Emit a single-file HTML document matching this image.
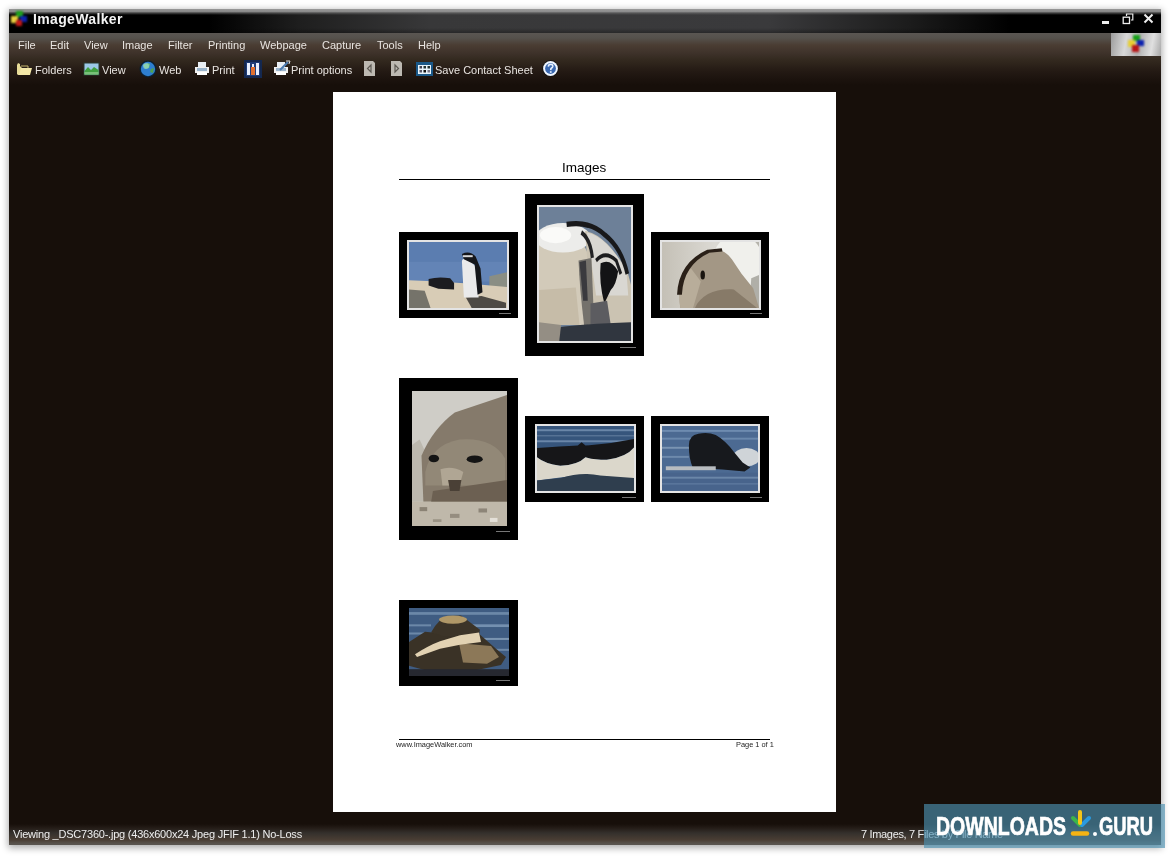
<!DOCTYPE html>
<html><head><meta charset="utf-8">
<style>
*{margin:0;padding:0;box-sizing:border-box}
html,body{width:1175px;height:859px;overflow:hidden;background:#fff;font-family:"Liberation Sans",sans-serif;-webkit-font-smoothing:antialiased}
#win,#page,#wm{will-change:transform}
.abs{position:absolute}
#win{position:absolute;left:9px;top:9px;width:1152px;height:836px;background:#170f0a;box-shadow:0 2px 7px 1px rgba(0,0,0,.33)}
#title{position:absolute;left:0;top:0;width:1152px;height:24px;
 background:linear-gradient(90deg,#000 0,#000 200px,#1e1e1e 290px,#383839 420px,#3a3a3c 760px,#1c1c1c 900px,#000 1000px,#000 100%)}
#title:before{content:"";position:absolute;left:0;top:0;right:0;height:6px;background:linear-gradient(rgba(160,160,160,.95) 0,rgba(150,150,150,.9) 2.5px,rgba(110,110,110,.6) 4px,rgba(0,0,0,0) 6px)}
#title:after{content:"";position:absolute;left:0;bottom:0;right:0;height:5px;background:linear-gradient(rgba(0,0,0,0),rgba(0,0,0,.3))}
#ttxt{position:absolute;left:24px;top:2px;font:bold 14px "Liberation Sans",sans-serif;letter-spacing:.35px;color:#f4f4f4;line-height:16px}
#bars{position:absolute;left:0;top:24px;width:1152px;height:60px;background:linear-gradient(#5a5652 0,#55514c 5px,#4a3d33 12px,#3e322a 20px,#33291f 27px,#241a14 38px,#1c130e 46px,#170f0a 52px)}
.menu{position:absolute;top:5px;font-size:11px;color:#e8e4e0;line-height:14px}
.tb{position:absolute;top:30px;font-size:11px;color:#e8e4e0;line-height:14px}
#status{position:absolute;left:0;top:806px;width:1152px;height:30px;background:linear-gradient(#170f0a 0,#170f0a 9px,#241c17 13px,#34302c 18px,#4a3e34 25px,#56504a 28px,#5a5550 30px)}
#stxt{position:absolute;left:4px;top:12px;font-size:11px;letter-spacing:-.22px;color:#eee;line-height:14px;white-space:nowrap}
#stxt2{position:absolute;left:852px;top:12px;font-size:11px;letter-spacing:-.33px;color:#eee;line-height:14px;white-space:nowrap}
#page{position:absolute;left:333px;top:92px;width:503px;height:720px;background:#fff}
.frame{position:absolute;background:#000}
.ph{position:absolute;border:2px solid #e4e4e4;overflow:hidden}
.pic{display:block}
#wm{position:absolute;left:924px;top:804px;width:241px;height:44px;background:rgba(75,144,177,.65)}
</style></head><body>
<div id="win">
 <div id="title">
  <div id="ttxt">ImageWalker</div>
  <svg class="abs" style="left:0;top:0;filter:blur(.9px)" width="22" height="22" viewBox="0 0 22 22">
   <defs><filter id="bl"><feGaussianBlur stdDeviation=".6"/></filter></defs>
   <g filter="url(#bl)">
   <rect x="7" y="2" width="7" height="6" fill="#1aa01a"/>
   <rect x="11" y="7" width="7" height="6" fill="#1020b0"/>
   <rect x="2" y="7" width="7" height="7" fill="#e8d040"/>
   <rect x="7" y="11" width="6" height="6" fill="#c01818"/>
   </g>
  </svg>
  <div class="abs" style="left:1093px;top:12px;width:7px;height:3px;background:#eee"></div>
  <svg class="abs" style="left:1113px;top:4px" width="12" height="12" viewBox="0 0 12 12">
   <path d="M4.5,3 L4.5,1 L10.8,1 L10.8,7 L9,7" fill="none" stroke="#eee" stroke-width="1.2"/>
   <rect x="1.2" y="4.2" width="6.3" height="6.3" fill="none" stroke="#eee" stroke-width="1.3"/>
  </svg>
  <svg class="abs" style="left:1134px;top:4px" width="11" height="11" viewBox="0 0 11 11">
   <path d="M1.5,1.5 L9.5,9.5 M9.5,1.5 L1.5,9.5" stroke="#eee" stroke-width="2"/>
  </svg>
 </div>
 <div id="bars">
  <div class="abs" style="left:1102px;top:0;width:50px;height:23px;background:linear-gradient(100deg,#9c9c9c 0,#d8d8d8 30%,#b0b0b0 55%,#e0e0e0 80%,#a8a8a8 100%)">
   <svg class="abs" style="left:14px;top:1px;filter:blur(.9px)" width="22" height="22" viewBox="0 0 22 22">
    <g filter="url(#bl)">
    <rect x="8" y="1" width="7" height="6" fill="#18a018"/>
    <rect x="12" y="6" width="7" height="6" fill="#1020b0"/>
    <rect x="3" y="6" width="7" height="7" fill="#e8d030"/>
    <rect x="7" y="11" width="7" height="7" fill="#b81818"/>
    </g>
   </svg>
  </div>
  <svg class="abs" style="left:7px;top:29px" width="17" height="15" viewBox="0 0 17 15">
   <path d="M1,3 L1,12 L2,13 L13,13 L15,6 L6,6 L4,4 L4,2 L2,1Z" fill="#e8dc98"/>
   <path d="M3,13 L5,6 L16,6 L14,13Z" fill="#f4e8a8"/>
   <path d="M5,4 L12,4 L12,6" stroke="#c8b870" fill="none"/>
  </svg>
  <svg class="abs" style="left:74px;top:29px" width="17" height="14" viewBox="0 0 17 14">
   <rect x=".5" y=".5" width="16" height="13" fill="#2a3a30" />
   <rect x="1.5" y="1.5" width="14" height="11" fill="#9cc8e8"/>
   <path d="M1.5,9 L5,5 L8,8 L11,5 L15.5,8 L15.5,12.5 L1.5,12.5Z" fill="#40a040"/>
   <rect x="1.5" y="10" width="14" height="2.5" fill="#78c078"/>
  </svg>
  <svg class="abs" style="left:130px;top:27px" width="18" height="18" viewBox="0 0 18 18">
   <circle cx="9" cy="9" r="8.5" fill="#0c2030"/>
   <circle cx="9" cy="9" r="7.2" fill="#2e7ed0"/>
   <path d="M4,5 Q8,2 11,4 L10,8 L6,9Z" fill="#6cc070"/>
   <path d="M12,9 L15,8 L14,13 L11,12Z" fill="#50a050"/>
   <circle cx="7" cy="6" r="3" fill="#a8e0f0" opacity=".5"/>
  </svg>
  <svg class="abs" style="left:185px;top:28px" width="16" height="15" viewBox="0 0 16 15">
   <rect x="4" y="1" width="8" height="5" fill="#e8eef4"/>
   <path d="M1,6 L15,6 L15,12 L1,12Z" fill="#f0f0f0"/>
   <rect x="3" y="7" width="10" height="3" fill="#9ab4cc"/>
   <rect x="3" y="11" width="10" height="3" fill="#fff"/>
  </svg>
  <svg class="abs" style="left:235px;top:27px" width="18" height="18" viewBox="0 0 18 18">
   <rect x="0" y="0" width="18" height="18" fill="#142850"/>
   <rect x="2" y="2" width="14" height="14" fill="#1e3c78"/>
   <rect x="3" y="3" width="3" height="12" fill="#e8f0ff"/>
   <rect x="8" y="4" width="2" height="11" fill="#e8f0ff"/>
   <rect x="12" y="3" width="3" height="12" fill="#e8f0ff"/>
   <rect x="7" y="7" width="4" height="8" fill="#e07030"/>
  </svg>
  <svg class="abs" style="left:264px;top:27px" width="18" height="16" viewBox="0 0 18 16">
   <rect x="4" y="2" width="8" height="5" fill="#e8eef4"/>
   <path d="M1,7 L15,7 L15,13 L1,13Z" fill="#f0f0f0"/>
   <rect x="3" y="8" width="10" height="3" fill="#9ab4cc"/>
   <rect x="3" y="12" width="10" height="3" fill="#fff"/>
   <path d="M7,10 L15,2" stroke="#4a7ab0" stroke-width="2"/>
   <path d="M13,1 L17,1 L16,4" stroke="#e0e0e0" stroke-width="1" fill="none"/>
  </svg>
  <svg class="abs" style="left:354px;top:28px" width="13" height="15" viewBox="0 0 13 15">
   <path d="M1,0 L10,0 L12,2 L12,15 L1,15Z" fill="#bdb9b2"/>
   <path d="M8,4 L4.5,7.5 L8,11Z" fill="none" stroke="#5e5a54" stroke-width="1.2"/>
  </svg>
  <svg class="abs" style="left:381px;top:28px" width="13" height="15" viewBox="0 0 13 15">
   <path d="M1,0 L10,0 L12,2 L12,15 L1,15Z" fill="#bdb9b2"/>
   <path d="M5,4 L8.5,7.5 L5,11Z" fill="none" stroke="#5e5a54" stroke-width="1.2"/>
  </svg>
  <svg class="abs" style="left:407px;top:29px" width="17" height="14" viewBox="0 0 17 14">
   <rect x="0" y="0" width="17" height="14" fill="#1a5888"/>
   <rect x="2" y="3" width="13" height="9" fill="#e8f4fc"/>
   <rect x="3.5" y="4" width="2.5" height="2.5" fill="#445"/><rect x="7.5" y="4" width="2.5" height="2.5" fill="#233"/><rect x="11.5" y="4" width="2.5" height="2.5" fill="#233"/>
   <rect x="3.5" y="8" width="2.5" height="2.5" fill="#556"/><rect x="7.5" y="8" width="2.5" height="2.5" fill="#111"/><rect x="11.5" y="8" width="2.5" height="2.5" fill="#778"/>
  </svg>
  <svg class="abs" style="left:533px;top:27px" width="17" height="17" viewBox="0 0 17 17">
   <circle cx="8.5" cy="8.5" r="8.2" fill="#111"/>
   <circle cx="8.5" cy="8.5" r="7.4" fill="#f0f6ff"/>
   <circle cx="8.5" cy="8.5" r="5.4" fill="#3a68b0"/>
   <path d="M6.3,6.6 Q6.5,4.3 8.7,4.3 Q10.9,4.4 10.8,6.4 Q10.6,7.8 9,8.5 L8.7,10.2" stroke="#e8f2ff" stroke-width="1.6" fill="none"/>
   <rect x="7.9" y="11.2" width="1.7" height="1.6" fill="#e8f2ff"/>
  </svg>
  <div class="menu" style="left:9px">File</div>
  <div class="menu" style="left:41px">Edit</div>
  <div class="menu" style="left:75px">View</div>
  <div class="menu" style="left:113px">Image</div>
  <div class="menu" style="left:159px">Filter</div>
  <div class="menu" style="left:199px">Printing</div>
  <div class="menu" style="left:251px">Webpage</div>
  <div class="menu" style="left:313px">Capture</div>
  <div class="menu" style="left:368px">Tools</div>
  <div class="menu" style="left:409px">Help</div>
  <div class="tb" style="left:26px">Folders</div>
  <div class="tb" style="left:93px">View</div>
  <div class="tb" style="left:150px">Web</div>
  <div class="tb" style="left:203px">Print</div>
  <div class="tb" style="left:282px">Print options</div>
  <div class="tb" style="left:426px">Save Contact Sheet</div>
 </div>
 <div id="status">
  <div id="stxt">Viewing _DSC7360-.jpg (436x600x24 Jpeg JFIF 1.1) No-Loss</div>
  <div id="stxt2">7 Images, 7 Files by File Name</div>
 </div>
</div>
<div id="page">
 <div class="abs" style="left:229px;top:68px;font-size:13.5px;line-height:16px;color:#000">Images</div>
 <div class="abs" style="left:66px;top:87px;width:371px;height:1px;background:#000"></div>
 <div class="frame" style="left:66px;top:140px;width:119px;height:86px">
  <div class="ph" style="left:8px;top:8px;width:102px;height:70px">
   <svg class="pic" width="98" height="66" viewBox="0 0 100 100" preserveAspectRatio="none">
    <rect width="100" height="100" fill="#5b7db0"/>
    <rect y="30" width="100" height="30" fill="#6384b6"/>
    <path d="M82,52 L100,46 L100,75 L82,72Z" fill="#8a8e84"/>
    <path d="M0,58 L30,60 L60,63 L100,68 L100,100 L0,100Z" fill="#d8ccb6"/>
    <path d="M0,72 L16,74 L22,100 L0,100Z" fill="#75736a"/>
    <path d="M20,56 Q30,52 42,55 L46,62 L46,72 L30,71 L20,66Z" fill="#1c1c20"/>
    <path d="M58,84 L74,82 L99,92 L99,100 L64,100Z" fill="#4e4a44"/>
    <path d="M54,30 Q54,22 62,28 L70,40 L71,84 L56,84Z" fill="#eaeaeb"/>
    <path d="M54,18 Q62,12 68,22 L73,40 L75,76 L70,80 L67,34 L56,26Z" fill="#15161a"/>
    <rect x="55" y="20" width="10" height="3" fill="#d8d8d8"/>
</svg>
  </div>
  <div class="abs" style="left:100px;top:81px;width:12px;height:1px;background:#777"></div>
 </div>
 <div class="frame" style="left:192px;top:102px;width:119px;height:162px">
  <div class="ph" style="left:12px;top:11px;width:96px;height:138px">
   <svg class="pic" width="92" height="134" viewBox="0 0 100 100" preserveAspectRatio="none">
    <rect width="100" height="100" fill="#6d8098"/>
    <path d="M0,26 Q30,24 50,30 L58,42 L62,88 L0,88Z" fill="#d2cab9"/>
    <path d="M0,62 L40,60 L44,88 L0,88Z" fill="#c6bca8"/>
    <ellipse cx="26" cy="23" rx="30" ry="11" fill="#ececea"/>
    <ellipse cx="18" cy="21" rx="17" ry="6" fill="#fafaf8"/>
    <path d="M50,18 Q72,20 96,48 L100,58 L100,88 L58,88Z" fill="#cbc3b2"/>
    <path d="M52,19 Q74,22 95,48 L97,66 L62,66 L56,36Z" fill="#d9d7d2"/>
    <path d="M30,13 Q55,10 72,21 Q90,31 96,50" stroke="#18181a" stroke-width="4" fill="none"/>
    <path d="M46,19 Q56,24 58,38" stroke="#222224" stroke-width="3.5" fill="none"/>
    <path d="M62,40 Q72,32 84,40 L89,50" stroke="#1c1c1e" stroke-width="3" fill="none"/>
    <path d="M67,42 Q78,38 86,48 Q84,58 78,62 L71,72 Q65,56 67,42Z" fill="#131315"/>
    <path d="M43,40 L57,38 L60,88 L49,88 Q44,60 43,40Z" fill="#75726c"/>
    <path d="M44,41 L51,40 L53,70 L48,70Z" fill="#3a3a3e"/>
    <path d="M56,72 L74,70 L78,88 L56,88Z" fill="#5c5c60"/>
    <path d="M20,90 Q50,87 100,86 L100,100 L20,100Z" fill="#30363f"/>
    <path d="M0,86 L24,88 L22,100 L0,100Z" fill="#948e84"/>
</svg>
  </div>
  <div class="abs" style="left:95px;top:153px;width:16px;height:1px;background:#777"></div>
 </div>
 <div class="frame" style="left:318px;top:140px;width:118px;height:86px">
  <div class="ph" style="left:9px;top:8px;width:101px;height:70px">
   <svg class="pic" width="97" height="66" viewBox="0 0 100 100" preserveAspectRatio="none">
    <defs><linearGradient id="g3" x1="0" y1="0" x2="1" y2="0"><stop offset="0" stop-color="#c4c0b6"/><stop offset=".55" stop-color="#dcdad4"/><stop offset="1" stop-color="#b4b2aa"/></linearGradient></defs>
    <rect width="100" height="100" fill="url(#g3)"/>
    <ellipse cx="78" cy="30" rx="26" ry="42" fill="#f0f0ec"/>
    <path d="M92,55 L100,50 L100,100 L90,100Z" fill="#b0afa8"/>
    <path d="M19,100 C15,62 24,28 46,14 C58,8 66,14 72,26 L82,48 L94,70 L100,100Z" fill="#a39785"/>
    <path d="M19,100 C16,75 20,50 30,40 L40,60 L32,100Z" fill="#b8ad9a"/>
    <path d="M34,100 C40,80 55,70 74,72 L98,100Z" fill="#877a68"/>
    <path d="M18,80 C19,48 30,26 48,14 L62,12" stroke="#2a2018" stroke-width="5" fill="none"/>
    <ellipse cx="42" cy="50" rx="2.3" ry="7" fill="#1a1510"/>
</svg>
  </div>
  <div class="abs" style="left:99px;top:81px;width:12px;height:1px;background:#777"></div>
 </div>
 <div class="frame" style="left:66px;top:286px;width:119px;height:162px">
  <div class="abs" style="left:13px;top:13px;width:95px;height:135px;overflow:hidden">
   <svg class="pic" width="95" height="135" viewBox="0 0 100 100" preserveAspectRatio="none">
    <rect width="100" height="100" fill="#cfcdc7"/>
    <path d="M0,40 L8,36 L14,45 L14,82 L0,82Z" fill="#bcb8ae"/>
    <path d="M10,48 Q22,28 45,16 L100,3 L100,82 L12,82Z" fill="#857a6b"/>
    <path d="M14,60 Q20,40 50,36 Q85,34 98,50 L98,70 L14,70Z" fill="#928877"/>
    <ellipse cx="23" cy="50" rx="5.5" ry="2.8" fill="#141414"/>
    <ellipse cx="66" cy="50.5" rx="8.5" ry="2.8" fill="#141414"/>
    <path d="M22,74 L100,66 L100,83 L20,83Z" fill="#6c6052"/>
    <path d="M30,58 Q42,55 54,60 L50,70 L32,70Z" fill="#b0a694"/>
    <path d="M38,66 L52,66 L50,74 L40,74Z" fill="#4a4036"/>
    <rect y="82" width="100" height="18" fill="#bfb8aa"/>
    <rect x="8" y="86" width="8" height="3" fill="#8a8274"/><rect x="40" y="91" width="10" height="3" fill="#958d80"/><rect x="70" y="87" width="9" height="3" fill="#8d8578"/><rect x="22" y="95" width="9" height="2" fill="#9a9284"/><rect x="82" y="94" width="8" height="3" fill="#e4e0d8"/>
</svg>
  </div>
  <div class="abs" style="left:97px;top:153px;width:14px;height:1px;background:#777"></div>
 </div>
 <div class="frame" style="left:192px;top:324px;width:119px;height:86px">
  <div class="ph" style="left:10px;top:8px;width:101px;height:69px">
   <svg class="pic" width="97" height="65" viewBox="0 0 100 100" preserveAspectRatio="none">
    <rect width="100" height="100" fill="#36557c"/>
    <rect y="5" width="100" height="3" fill="#6a86a8"/><rect y="14" width="100" height="2" fill="#5a7698"/><rect y="22" width="100" height="3" fill="#6a86a8"/>
    <path d="M0,34 Q25,31 42,30 L46,25 L50,30 Q75,28 100,20 L100,33 Q92,48 72,52 Q58,52 50,48 Q42,60 24,61 Q8,58 0,48Z" fill="#161618"/>
    <path d="M0,48 Q8,58 24,61 Q42,60 50,48 Q58,52 72,52 Q92,48 100,33 L100,82 L60,76 L30,78 L0,84Z" fill="#dbd7cb"/>
    <path d="M0,84 L25,80 Q45,70 65,76 L100,80 L100,100 L0,100Z" fill="#2f3e4e"/>
</svg>
  </div>
  <div class="abs" style="left:97px;top:81px;width:14px;height:1px;background:#777"></div>
 </div>
 <div class="frame" style="left:318px;top:324px;width:118px;height:86px">
  <div class="ph" style="left:9px;top:8px;width:100px;height:69px">
   <svg class="pic" width="96" height="65" viewBox="0 0 100 100" preserveAspectRatio="none">
    <rect width="100" height="100" fill="#4c6a92"/>
    <rect y="6" width="100" height="3" fill="#6e8cb0"/><rect y="18" width="100" height="3" fill="#6a88ac"/><rect y="32" width="30" height="3" fill="#7a94b2"/><rect y="46" width="28" height="3" fill="#6e8aac"/>
    <rect y="72" width="100" height="28" fill="#48648c"/>
    <rect y="78" width="100" height="3" fill="#6a86a8"/><rect y="88" width="100" height="2" fill="#5e7aa0"/>
    <ellipse cx="88" cy="48" rx="14" ry="14" fill="#cfd4d8"/>
    <path d="M28,30 Q28,14 38,12 Q48,9 56,14 Q66,22 76,42 L84,56 L92,64 L86,70 L63,67 L32,64 Q28,50 28,30Z" fill="#17191d"/>
    <rect x="4" y="62" width="52" height="6" fill="#b8bcc0"/>
</svg>
  </div>
  <div class="abs" style="left:99px;top:81px;width:12px;height:1px;background:#777"></div>
 </div>
 <div class="frame" style="left:66px;top:508px;width:119px;height:86px">
  <div class="abs" style="left:10px;top:8px;width:100px;height:68px;overflow:hidden">
   <svg class="pic" width="100" height="68" viewBox="0 0 100 100" preserveAspectRatio="none">
    <rect width="100" height="100" fill="#3f5c82"/>
    <rect y="6" width="100" height="4" fill="#6c88a8"/><rect x="60" y="24" width="40" height="4" fill="#7490b0"/><rect x="72" y="44" width="28" height="3" fill="#7a94b0"/><rect y="24" width="22" height="3" fill="#6c88a8"/><rect y="36" width="16" height="3" fill="#6c88a8"/><rect x="80" y="60" width="20" height="3" fill="#6c88a8"/>
    <path d="M0,50 L16,35 L36,38 L70,38 L87,60 L97,72 L92,84 L62,93 L20,93 L0,85Z" fill="#3a3226"/>
    <path d="M22,36 Q30,14 40,12 L52,11 L62,22 L71,32 L70,40 L36,42Z" fill="#3c3428"/>
    <ellipse cx="44" cy="17" rx="14" ry="6" fill="#b09868"/>
    <path d="M50,52 L82,56 L90,72 L78,82 L54,80Z" fill="#8c7858"/>
    <path d="M6,68 Q20,55 31,49 L51,40 L70,36 L72,50 L51,54 L31,60 L8,72Z" fill="#e2d2b2"/>
    <rect y="90" width="100" height="10" fill="#262830"/>
</svg>
  </div>
  <div class="abs" style="left:97px;top:80px;width:14px;height:1px;background:#777"></div>
 </div>
 <div class="abs" style="left:66px;top:647px;width:371px;height:1px;background:#000"></div>
 <div class="abs" style="left:63px;top:648px;font-size:7.4px;line-height:9px;color:#222;white-space:nowrap">www.ImageWalker.com</div>
 <div class="abs" style="left:403px;top:648px;font-size:7.4px;line-height:9px;color:#222;white-space:nowrap">Page 1 of 1</div>
</div>
<div id="wm">
 <div class="abs" style="left:12px;top:7px;font:bold 25.5px/30px 'Liberation Sans',sans-serif;color:#fff;-webkit-text-stroke:.7px #fff;transform:scaleX(.765);transform-origin:0 0;white-space:nowrap">DOWNLOADS</div>
 <svg class="abs" style="left:146px;top:5px" width="22" height="29" viewBox="0 0 22 29">
  <path d="M3,9 L10,16" stroke="#3cb44a" stroke-width="4" stroke-linecap="round"/>
  <path d="M19,9 L12,16" stroke="#2a9ae0" stroke-width="4" stroke-linecap="round"/>
  <path d="M10,3 L10,14" stroke="#f5c518" stroke-width="4" stroke-linecap="round"/>
  <path d="M3,24.5 L17,24.5" stroke="#f5b414" stroke-width="4.5" stroke-linecap="round"/>
 </svg>
 <div class="abs" style="left:169px;top:28px;width:4px;height:4px;border-radius:2px;background:#fff"></div>
 <div class="abs" style="left:175px;top:7px;font:bold 25.5px/30px 'Liberation Sans',sans-serif;color:#fff;-webkit-text-stroke:.7px #fff;transform:scaleX(.72);transform-origin:0 0;white-space:nowrap">GURU</div>
</div>
</body></html>
